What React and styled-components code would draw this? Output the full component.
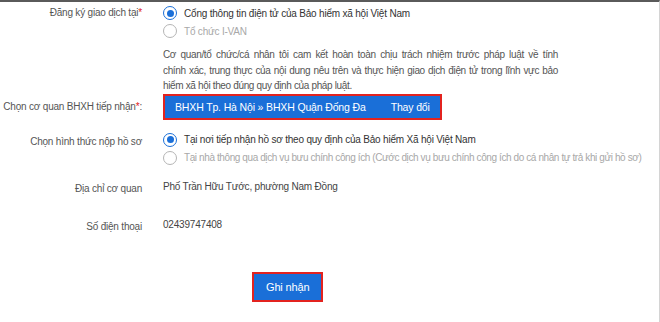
import React from 'react';
import styled, { createGlobalStyle } from 'styled-components';

const GlobalStyle = createGlobalStyle`
  html, body { margin: 0; padding: 0; background: #fff; }
  body { font-family: "Liberation Sans", Arial, sans-serif; }
`;

const Page = styled.div`
  box-sizing: border-box;
  width: 660px;
  height: 322px;
  border-top: 2px solid #5a5a5a;
  border-right: 1px solid #d4d4d4;
  padding-top: 2px;
  font-size: 10px;
  letter-spacing: -0.2px;
  color: #555;
  overflow: hidden;
`;

const Row = styled.div`
  display: grid;
  grid-template-columns: 142px 1fr;
  column-gap: 21px;
  align-items: ${p => (p.$center ? 'center' : 'start')};
  margin-top: ${p => p.$top || 0}px;
`;

const Label = styled.div`
  text-align: right;
  white-space: nowrap;
  line-height: 18px;
  padding-top: ${p => p.$offset || 0}px;
  color: #555;
`;

const Req = styled.span`
  color: #e02020;
`;

const Options = styled.div`
  display: flex;
  flex-direction: column;
`;

const Option = styled.label`
  display: flex;
  align-items: center;
  gap: 7px;
  height: 18px;
  color: ${p => (p.$disabled ? '#a8a8a8' : '#333')};
  letter-spacing: ${p => (p.$tight ? '-0.4px' : 'inherit')};
  white-space: nowrap;
`;

const Radio = styled.span`
  box-sizing: border-box;
  width: 14px;
  height: 14px;
  border-radius: 50%;
  border: 1.5px solid ${p => (p.$checked ? '#1a6fd8' : '#b5b5b5')};
  display: flex;
  align-items: center;
  justify-content: center;
  flex: none;
  &::after {
    content: '';
    width: 7px;
    height: 7px;
    border-radius: 50%;
    background: ${p => (p.$checked ? '#1a6fd8' : 'transparent')};
  }
`;

const Note = styled.div`
  margin-top: 7px;
  width: 395px;
  line-height: 15.5px;
  letter-spacing: -0.35px;
  color: #555;
`;

const NoteLine = styled.span`
  display: block;
  white-space: nowrap;
  text-align: ${p => (p.$last ? 'left' : 'justify')};
  text-align-last: ${p => (p.$last ? 'left' : 'justify')};
`;

const Outline = styled.div`
  display: inline-flex;
  border: 2px solid #e3231f;
  justify-self: start;
`;

const BlueButton = styled.button`
  display: flex;
  align-items: center;
  gap: ${p => p.$gap || 0}px;
  border: 0;
  margin: 0;
  background: #1a6fd8;
  color: #fff;
  font-family: inherit;
  font-size: ${p => p.$fs}px;
  letter-spacing: -0.15px;
  height: ${p => p.$h}px;
  padding: 0 ${p => p.$px}px;
  cursor: pointer;
`;

const Value = styled.div`
  color: #444;
  line-height: 18px;
`;

const Footer = styled.div`
  display: flex;
  padding-left: 252px;
  margin-top: 36px;
`;

export default function App() {
  return (
    <Page>
      <GlobalStyle />
      <Row>
        <Label>Đăng ký giao dịch tại<Req>*</Req></Label>
        <div>
          <Options>
            <Option><Radio $checked />Cổng thông tin điện tử của Bảo hiểm xã hội Việt Nam</Option>
            <Option $disabled><Radio />Tổ chức I-VAN</Option>
          </Options>
          <Note>
            <NoteLine>Cơ quan/tổ chức/cá nhân tôi cam kết hoàn toàn chịu trách nhiệm trước pháp luật về tính</NoteLine>
            <NoteLine>chính xác, trung thực của nội dung nêu trên và thực hiện giao dịch điện tử trong lĩnh vực bảo</NoteLine>
            <NoteLine $last>hiểm xã hội theo đúng quy định của pháp luật.</NoteLine>
          </Note>
        </div>
      </Row>

      <Row $center>
        <Label>Chọn cơ quan BHXH tiếp nhận<Req>*</Req>:</Label>
        <Outline>
          <BlueButton $h={22} $px={10} $gap={25} $fs={10.5}>
            <span>BHXH Tp. Hà Nội » BHXH Quận Đống Đa</span>
            <span>Thay đổi</span>
          </BlueButton>
        </Outline>
      </Row>

      <Row $top={11}>
        <Label $offset={2}>Chọn hình thức nộp hồ sơ</Label>
        <Options>
          <Option><Radio $checked />Tại nơi tiếp nhận hồ sơ theo quy định của Bảo hiểm Xã hội Việt Nam</Option>
          <Option $disabled $tight><Radio />Tại nhà thông qua dịch vụ bưu chính công ích (Cước dịch vụ bưu chính công ích do cá nhân tự trả khi gửi hồ sơ)</Option>
        </Options>
      </Row>

      <Row $top={11}>
        <Label $offset={2}>Địa chỉ cơ quan</Label>
        <Value>Phố Trần Hữu Tước, phường Nam Đồng</Value>
      </Row>

      <Row $top={18}>
        <Label $offset={2}>Số điện thoại</Label>
        <Value>02439747408</Value>
      </Row>

      <Footer>
        <Outline>
          <BlueButton $h={26} $px={12} $fs={11}>Ghi nhận</BlueButton>
        </Outline>
      </Footer>
    </Page>
  );
}
